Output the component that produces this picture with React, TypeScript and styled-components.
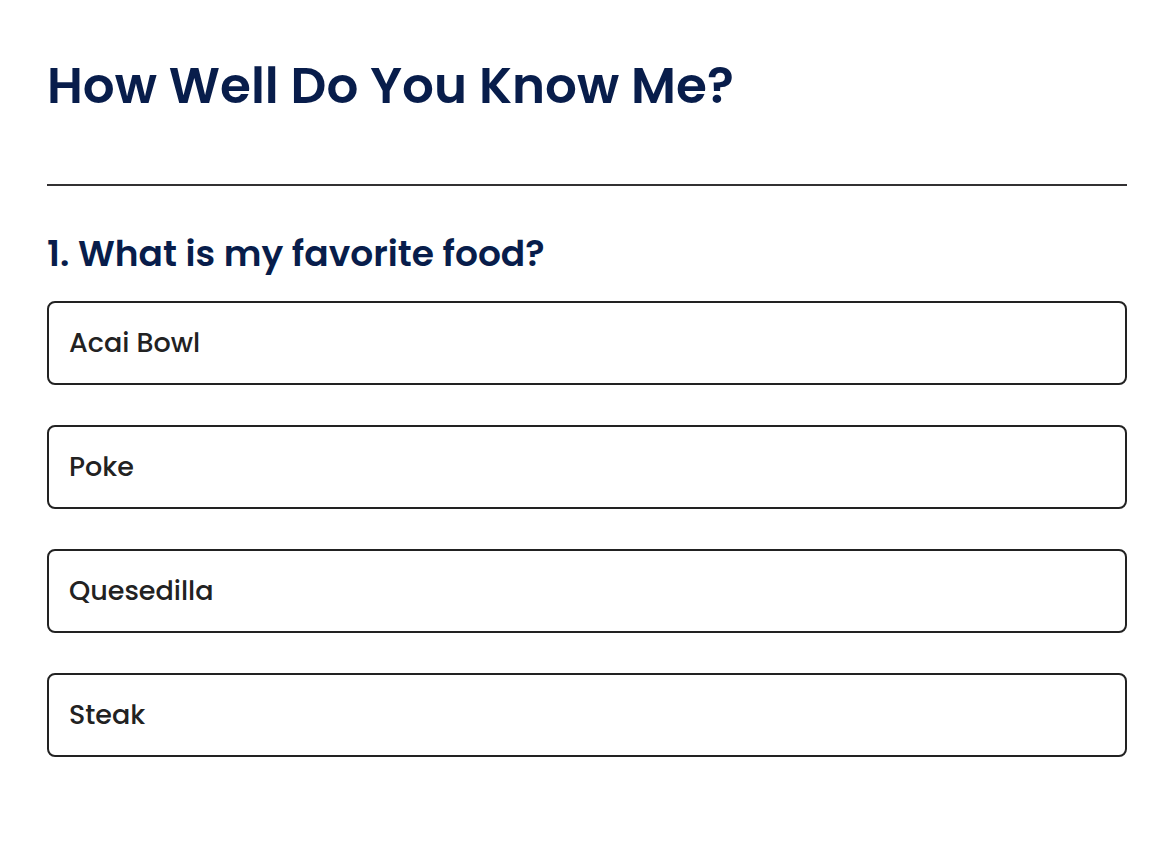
import React, { useState } from "react";
import styled, { createGlobalStyle } from "styled-components";

const GlobalStyle = createGlobalStyle`
  *, *::before, *::after {
    box-sizing: border-box;
  }
  body {
    margin: 0;
    background: #ffffff;
    color: #222222;
    font-family: Poppins, Inter, "Liberation Sans", sans-serif;
  }
`;

const Page = styled.main`
  padding: 48px 49px 48px 47px;
`;

const Title = styled.h1`
  margin: 0;
  padding-bottom: 60px;
  border-bottom: 2px solid #333133;
  color: #081d4b;
  font-size: 50px;
  font-weight: 600;
  line-height: 76px;
`;

const Question = styled.fieldset`
  min-width: 0;
  margin: 0;
  padding: 0;
  border: 0;
`;

const Prompt = styled.legend`
  padding: 40px 0 19px;
  color: #081d4b;
  font-size: 36px;
  font-weight: 600;
  line-height: 56px;
`;

const Options = styled.div`
  display: flex;
  flex-direction: column;
  gap: 40px;
`;

const Option = styled.button<{ $selected: boolean }>`
  width: 100%;
  padding: 20px;
  border: 2px solid #222222;
  border-radius: 8px;
  background: ${({ $selected }) => ($selected ? "#e8edf8" : "#ffffff")};
  color: #222222;
  font-family: inherit;
  font-size: 27px;
  font-weight: 500;
  line-height: 40px;
  text-align: left;
  cursor: pointer;
`;

const foods = ["Acai Bowl", "Poke", "Quesedilla", "Steak"];

export default function App() {
  const [choice, setChoice] = useState<string | null>(null);

  return (
    <>
      <GlobalStyle />
      <Page>
        <Title>How Well Do You Know Me?</Title>
        <Question>
          <Prompt>1. What is my favorite food?</Prompt>
          <Options>
            {foods.map((food) => (
              <Option
                key={food}
                type="button"
                $selected={choice === food}
                aria-pressed={choice === food}
                onClick={() => setChoice(food)}
              >
                {food}
              </Option>
            ))}
          </Options>
        </Question>
      </Page>
    </>
  );
}
